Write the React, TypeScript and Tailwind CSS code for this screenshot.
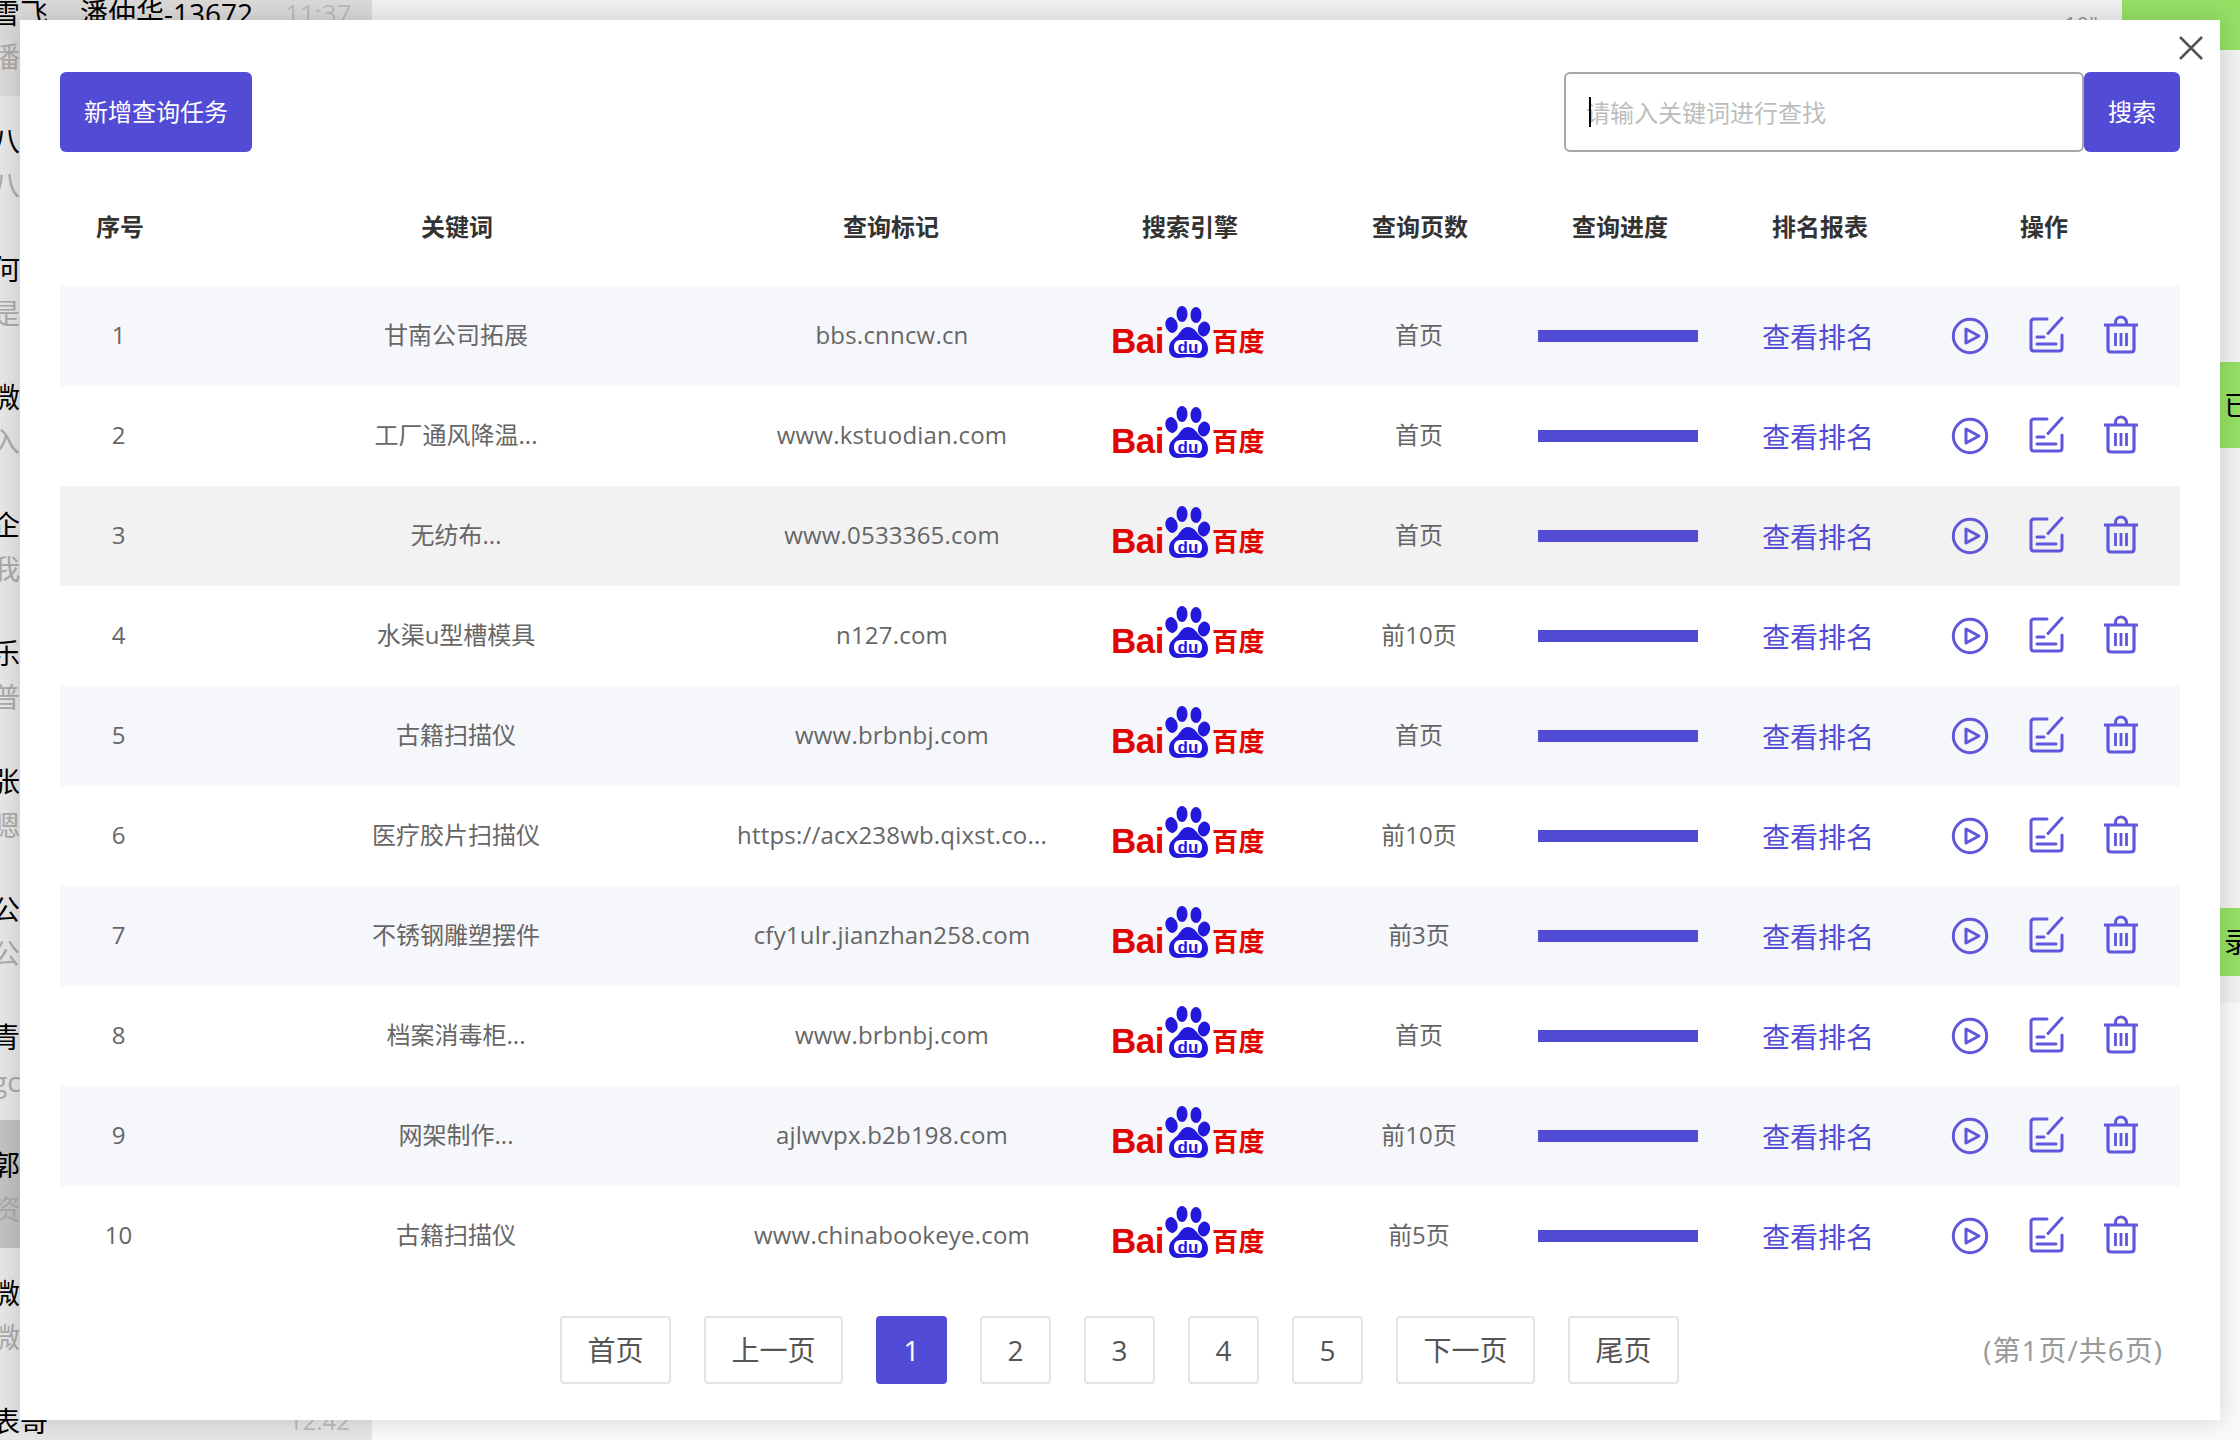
import React from "react";

const rows = [
  ["1", "甘南公司拓展", "bbs.cnncw.cn", "首页"],
  ["2", "工厂通风降温...", "www.kstuodian.com", "首页"],
  ["3", "无纺布...", "www.0533365.com", "首页"],
  ["4", "水渠u型槽模具", "n127.com", "前10页"],
  ["5", "古籍扫描仪", "www.brbnbj.com", "首页"],
  ["6", "医疗胶片扫描仪", "https://acx238wb.qixst.co...", "前10页"],
  ["7", "不锈钢雕塑摆件", "cfy1ulr.jianzhan258.com", "前3页"],
  ["8", "档案消毒柜...", "www.brbnbj.com", "首页"],
  ["9", "网架制作...", "ajlwvpx.b2b198.com", "前10页"],
  ["10", "古籍扫描仪", "www.chinabookeye.com", "前5页"],
];

const chats = [
  ["雪飞", "潘"],
  ["八", "八"],
  ["何", "是"],
  ["微", "入"],
  ["企", "我"],
  ["乐", "普"],
  ["张", "嗯"],
  ["公", "公"],
  ["青", "gc"],
  ["郭", "资"],
  ["微", "微"],
  ["表哥", ""],
];

const cols = "grid grid-cols-[120px_554px_314px_284px_176px_224px_176px_272px]";

function BaiduLogo() {
  return (
    <div className="flex items-end gap-[1px] pb-2 font-['Liberation_Sans','Noto_Sans_CJK_SC',sans-serif] font-bold leading-none text-[#e10601]">
      <span className="mb-[2px] text-[35px] leading-[31px] tracking-[-0.5px]">Bai</span>
      <svg width="46" height="52" viewBox="0 0 46 52" className="shrink-0">
        <g fill="#2319dc">
          <ellipse cx="17" cy="8" rx="5.5" ry="8" />
          <ellipse cx="31" cy="9" rx="5.5" ry="8" />
          <ellipse cx="6.5" cy="19" rx="6" ry="8" transform="rotate(-15 6.5 19)" />
          <ellipse cx="39" cy="23" rx="6" ry="7.500" transform="rotate(15 39 23)" />
          <path d="M23 21c-5 0-7 4-10 8-3 3-9 6-9 14 0 6 4 9 9 9 4 0 6-1 10-1s7 1 11 1c5 0 9-3 9-9 0-8-6-11-9-14-3-4-6-8-11-8z" />
        </g>
        <rect x="9" y="34" width="28" height="14" rx="6" fill="#fff" />
        <text x="23" y="46.500" textAnchor="middle" fill="#2319dc" fontSize="17" fontWeight="700" fontFamily="Liberation Sans, sans-serif">du</text>
      </svg>
      <span className="mb-[2px] text-[26px] leading-[28px] tracking-[0.5px]">百度</span>
    </div>
  );
}

function PlayIcon() {
  return (
    <svg width="38" height="38" viewBox="0 0 38 38" fill="none" stroke="#5f57dc" strokeWidth="3" strokeLinejoin="round">
      <circle cx="19" cy="19" r="16.700" />
      <path d="M15 12l13 7-13 7z" />
    </svg>
  );
}

function EditIcon() {
  return (
    <svg width="36" height="38" viewBox="0 0 36 38" fill="none" stroke="#5f57dc" strokeWidth="3" strokeLinecap="round" strokeLinejoin="round" className="-mt-[2px]">
      <path d="M19 3H6Q3 3 3 6v26q0 3 3 3h25q3 0 3-3V19" />
      <path d="M20 17.500L34 2" />
      <path d="M9 21h7M9 28h19" />
    </svg>
  );
}

function TrashIcon() {
  return (
    <svg width="36" height="40" viewBox="0 0 36 40" fill="none" stroke="#5f57dc" strokeWidth="3" strokeLinejoin="round" className="-mt-[3px]">
      <path d="M1 10h34" />
      <path d="M12.500 10V7.500a5.500 5.500 0 0 1 11 0V10" />
      <path d="M5 11v23q0 3 3 3h20q3 0 3-3V11" strokeWidth="3.200" />
      <path d="M12.500 18v13M18 18v13M23.500 18v13" strokeWidth="2.800" />
    </svg>
  );
}

function PageButton({ label, width, active }: { label: string; width: string; active?: boolean }) {
  return (
    <button
      className={
        active
          ? `${width} h-[68px] rounded bg-[#524bd6] text-[28px] text-white`
          : `${width} h-[68px] rounded border-2 border-[#e3e3e3] bg-white text-[28px] text-[#555]`
      }
    >
      {label}
    </button>
  );
}

export default function App() {
  return (
    <div className="relative h-[1440px] w-[2240px] overflow-hidden bg-white font-['Open_Sans','Noto_Sans_CJK_SC',sans-serif]">
      <div className="flex h-full">
        <div className="flex w-[372px] shrink-0 flex-col bg-[#e7e6e6] pt-0">
          {chats.map((c, i) => (
            <div
              key={i}
              className={
                i === 0
                  ? "relative -mt-[32px] h-[128px] shrink-0 bg-[#dcdad8] pl-0"
                  : i === 9
                    ? "relative h-[128px] shrink-0 bg-[#c2c2c2]"
                    : "relative h-[128px] shrink-0"
              }
            >
              <div className="-ml-2 flex h-[90px] items-center text-[28px] leading-none text-black">
                <span>{c[0]}</span>
                {i === 0 && <span className="ml-[32px]">潘仲华-13672</span>}
                {i === 0 && <span className="ml-[32px] text-[26px] text-[#bbb]">11:37</span>}
                {i === 11 && <span className="ml-auto mr-[22px] text-[24px] text-[#bbb]">12:42</span>}
              </div>
              <div className="-mt-[15px] -ml-2 text-[28px] leading-none text-[#aaa]">{c[1]}</div>
            </div>
          ))}
        </div>
        <div className="flex min-w-0 flex-1 flex-col">
          <div className="flex h-[1003px] flex-col bg-[#f1f1f1]">
            <div className="flex h-[50px]">
              <span className="ml-[1692px] mt-[8px] w-[58px] text-[22px] text-[#999]">10"</span>
              <div className="h-full flex-1 bg-[#95e065]" />
            </div>
            <div className="mt-[312px] flex h-[86px] items-center justify-end bg-[#95e065] text-[28px] text-black">
              <span className="-mr-3">已</span>
            </div>
            <div className="mt-[460px] flex h-[68px] items-center justify-end bg-[#95e065] text-[28px] text-black">
              <span className="-mr-3">录</span>
            </div>
          </div>
          <div className="flex-1 bg-[#fafafa]" />
        </div>
      </div>

      <div className="absolute left-[20px] top-[20px] h-[1400px] w-[2200px] bg-white px-10 pt-[52px] shadow-[0_0_24px_rgba(0,0,0,0.16)]">
        <button className="absolute right-[17px] top-[16px] text-[#555]" aria-label="关闭">
          <svg width="24" height="24" viewBox="0 0 24 24" fill="none" stroke="currentColor" strokeWidth="2.600">
            <path d="M1 1l22 22M23 1L1 23" />
          </svg>
        </button>

        <div className="flex h-20 justify-between">
          <button className="h-20 w-[192px] rounded-md bg-[#524bd6] text-2xl text-white">新增查询任务</button>
          <div className="flex">
            <div className="relative">
              <input
                className="h-20 w-[520px] rounded-md border-2 border-[#a8a8a8] bg-white pl-5 text-2xl outline-none placeholder:text-[#bdbdbd]"
                placeholder="请输入关键词进行查找"
                readOnly
              />
              <span className="absolute left-[25px] top-[25px] h-[30px] w-[2px] bg-black" />
            </div>
            <button className="h-20 w-[96px] rounded-md bg-[#524bd6] text-2xl text-white">搜索</button>
          </div>
        </div>

        <div className={`${cols} mt-[18px] h-[116px] items-center pb-[2px] text-center text-2xl font-semibold text-[#333]`}>
          {["序号", "关键词", "查询标记", "搜索引擎", "查询页数", "查询进度", "排名报表", "操作"].map((h) => (
            <div key={h}>{h}</div>
          ))}
        </div>

        <div>
          {rows.map((r, i) => (
            <div
              key={r[0]}
              className={
                i === 2
                  ? `${cols} h-[100px] items-center bg-[#f2f2f2] text-center text-2xl text-[#666]`
                  : i % 2 === 0
                    ? `${cols} h-[100px] items-center bg-[#f5f7fa] text-center text-2xl text-[#666]`
                    : `${cols} h-[100px] items-center bg-white text-center text-2xl text-[#666]`
              }
            >
              <div className="pr-[3px] pb-[2px]">{r[0]}</div>
              <div className="pr-[2px] pb-[2px]">{r[1]}</div>
              <div className="pl-[2px] pb-[2px] tracking-[0.2px]">{r[2]}</div>
              <div className="flex justify-center pr-[4px]">
                <BaiduLogo />
              </div>
              <div className="pr-[2px] pb-[2px]">{r[3]}</div>
              <div className="flex justify-center pr-[5px]">
                <div className="h-3 w-40 bg-[#524bd6]" />
              </div>
              <div className="pr-[4px] pt-[3px] text-[28px] text-[#524bd6]">查看排名</div>
              <div className="flex items-center justify-center gap-[39px] pl-[2px]">
                <PlayIcon />
                <EditIcon />
                <TrashIcon />
              </div>
            </div>
          ))}
        </div>

        <div className="mt-[30px] flex h-[68px] items-center pl-[500px] pr-[17px]">
          <div className="flex gap-[33px]">
            <PageButton label="首页" width="w-[111px]" />
            <PageButton label="上一页" width="w-[139px]" />
            <PageButton label="1" width="w-[71px]" active />
            <PageButton label="2" width="w-[71px]" />
            <PageButton label="3" width="w-[71px]" />
            <PageButton label="4" width="w-[71px]" />
            <PageButton label="5" width="w-[71px]" />
            <PageButton label="下一页" width="w-[139px]" />
            <PageButton label="尾页" width="w-[111px]" />
          </div>
          <span className="ml-auto text-[28px] tracking-[1px] text-[#999]">(第1页/共6页)</span>
        </div>
      </div>
    </div>
  );
}
